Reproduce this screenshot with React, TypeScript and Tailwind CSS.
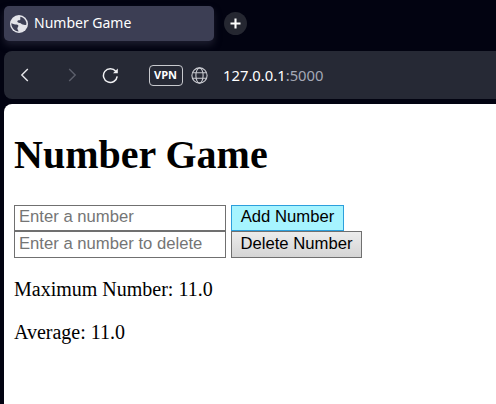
import React from "react";

function FaviconGlobe() {
  return (
    <svg className="size-[18px] shrink-0" viewBox="0 0 18 18">
      <circle cx="9" cy="9" r="9" fill="#e4e4ea" />
      <path
        d="M1.3 8.3 4.2 9.2C5.6 9.6 7.4 9.2 8.2 10.3 8.9 11.5 7.6 12.2 7.4 13.2 7.2 14.4 8.2 14.8 8.6 16.4 4.6 16.2 1.4 13 1.3 8.3Z"
        fill="#3e4056"
      />
      <path
        d="M10.6 1.8C13.4 2.6 15.6 4.6 16.3 7.4L16.4 9.4C15.2 10.4 14 9.7 12.8 9.5 11.4 9.3 11.2 8.2 9.8 8 8 7.9 7 7.1 7.4 6.1 7.8 5.2 9.4 5.6 10.2 4.8 10.9 4 9.6 3 10.6 1.8Z"
        fill="#3e4056"
      />
    </svg>
  );
}

function TabBar() {
  return (
    <div className="flex h-[51px] items-start pt-[6px] pl-[4px]">
      <div className="flex h-[35px] w-[210px] items-center rounded-[5px] bg-[#3c3e54] pl-[6px] shadow-[0_4px_7px_#1c1d2e]">
        <FaviconGlobe />
        <span className="ml-[6px] pb-px font-['Noto_Sans',sans-serif] text-[14px] leading-5 whitespace-nowrap text-white">
          Number Game
        </span>
      </div>
      <div className="mt-[6px] ml-[10px] flex size-[23px] items-center justify-center rounded-full bg-[#252731]">
        <svg className="size-[11px]" viewBox="0 0 11 11" stroke="#ffffff" strokeWidth="2.1">
          <path d="M5.5 .5V10.5M.5 5.5H10.5" />
        </svg>
      </div>
    </div>
  );
}

function AddressBar() {
  return (
    <div className="ml-[4px] flex h-[48px] items-center rounded-l-[8px] bg-[#262935]">
      <svg className="ml-[16px] h-[14px] w-[9px]" viewBox="0 0 9 14" fill="none" stroke="#e7e7eb" strokeWidth="1.4">
        <path d="M7.8 1 1.8 7 7.8 13" />
      </svg>
      <svg className="ml-[39px] h-[14px] w-[9px]" viewBox="0 0 9 14" fill="none" stroke="#5c5f6b" strokeWidth="1.4">
        <path d="M1.2 1 7.2 7 1.2 13" />
      </svg>
      <svg className="ml-[25px] size-[17px]" viewBox="0 0 17 17" fill="none" stroke="#f1f1f4" strokeWidth="1.5">
        <path d="M13.8 4.3A6.9 6.9 0 1 0 15.2 9.4" />
        <path d="M15.8 1.4V6.2H11Z" fill="#f1f1f4" stroke="none" />
      </svg>
      <div className="ml-[29.5px] flex h-[21px] w-[34px] items-center justify-center rounded-[4px] border-[1.4px] border-[#c8c9ce] font-['Open_Sans',sans-serif] text-[11px] font-bold text-white">
        VPN
      </div>
      <svg className="ml-[8.5px] size-[17px]" viewBox="0 0 17 17" fill="none" stroke="#c9cad0" strokeWidth="1.1">
        <circle cx="8.5" cy="8.5" r="7.6" />
        <ellipse cx="8.5" cy="8.5" rx="3.6" ry="7.6" />
        <path d="M1.7 5.7H15.3M1.7 11.3H15.3" />
      </svg>
      <span className="ml-[15px] font-['Noto_Sans',sans-serif] text-[14.8px] leading-5 whitespace-nowrap text-white">
        127.0.0.1<span className="text-[#a4a8b6]">:5000</span>
      </span>
    </div>
  );
}

const inputClass =
  "block w-[212px] border border-[#707070] bg-white px-[4px] pb-[2px] font-['Liberation_Sans',Arial,sans-serif] text-[16.67px] leading-[22px] text-black outline-none placeholder:text-[#757575] placeholder:opacity-100";
const buttonClass =
  "border pb-[2px] font-['Liberation_Sans',Arial,sans-serif] text-[16.67px] leading-[22px] whitespace-nowrap text-black";

export default function App() {
  return (
    <div className="flex h-[404px] w-[496px] flex-col overflow-hidden bg-[#020311]">
      <TabBar />
      <AddressBar />
      <main className="mt-[5px] ml-[4px] grow rounded-tl-[8px] bg-white pl-[10px] font-['Liberation_Serif',serif] text-black">
        <h1 className="pt-[28px] text-[40px] leading-[46px] font-bold whitespace-nowrap">Number Game</h1>
        <form className="mt-[27px] flex gap-[5px]">
          <input className={`${inputClass} h-[26px]`} placeholder="Enter a number" />
          <button type="button" className={`${buttonClass} h-[26px] w-[113px] border-[#2c9fdc] bg-[#a6f4ff]`}>
            Add Number
          </button>
        </form>
        <form className="flex gap-[5px]">
          <input className={`${inputClass} h-[27px]`} placeholder="Enter a number to delete" />
          <button
            type="button"
            className={`${buttonClass} h-[27px] w-[131px] border-[#707070] bg-linear-to-b from-[#ececec] to-[#d5d5d5]`}
          >
            Delete Number
          </button>
        </form>
        <p className="mt-[20px] text-[20px] leading-[23px]">Maximum Number: 11.0</p>
        <p className="mt-[20px] text-[20px] leading-[23px]">Average: 11.0</p>
      </main>
    </div>
  );
}
